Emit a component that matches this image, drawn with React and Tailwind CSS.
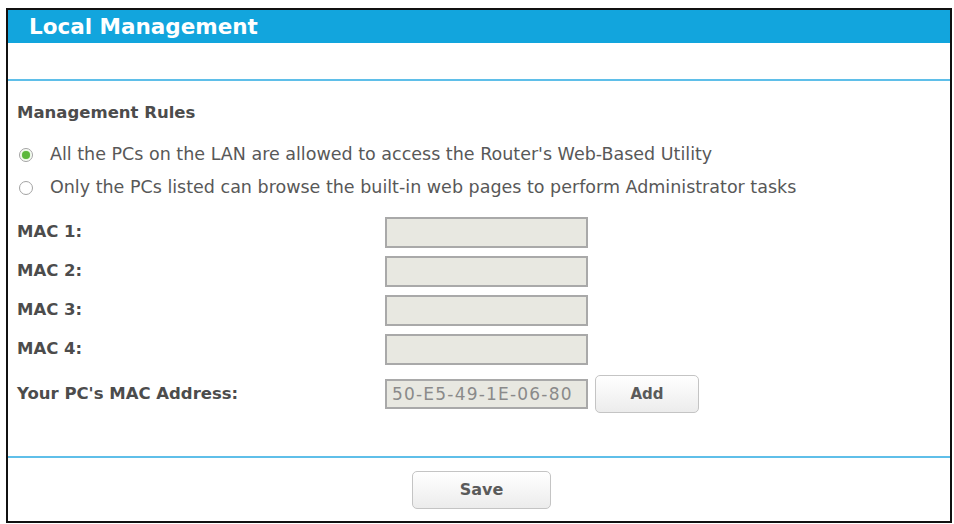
import React, { useState } from 'react';

const font = { fontFamily: '"DejaVu Sans", Verdana, sans-serif' };

const Radio = ({ checked, onClick }) => (
  <span
    onClick={onClick}
    className="flex items-center justify-center w-[14px] h-[14px] rounded-full border border-[#a3a3a3] bg-white cursor-pointer"
  >
    {checked && <span className="w-[8px] h-[8px] rounded-full bg-[#5cb83c] shadow-[0_0_2px_#9be07f]" />}
  </span>
);

const MacInput = () => (
  <input
    type="text"
    className="w-[203px] h-[31px] px-[6px] border-2 border-[#a9a9a9] bg-[#e8e8e1] text-[17px] text-[#8a8a8a] outline-none"
  />
);

const Button = ({ children, className = '' }) => (
  <button
    type="button"
    className={`h-[38px] rounded-[5px] border border-[#c4c4c4] bg-gradient-to-b from-white to-[#ececec] font-bold text-[#5a5a5a] ${className}`}
  >
    {children}
  </button>
);

export default function App() {
  const [rule, setRule] = useState(0);
  const macs = ['MAC 1:', 'MAC 2:', 'MAC 3:', 'MAC 4:'];

  return (
    <div className="w-[954px] h-[524px] bg-white overflow-hidden" style={font}>
      <div className="ml-[6px] mt-[8px] w-[946px] h-[515px] border-2 border-[#111] flex flex-col">
        <div className="h-[33px] bg-[#12a5dd] flex items-center pl-[21px]">
          <span className="text-[21.5px] font-bold text-white leading-none">Local Management</span>
        </div>

        <div className="mt-[36px] h-[2px] bg-[#5fbfe9]" />

        <div className="mt-[24px] pl-[9px] h-[16px] leading-[16px] text-[16.5px] font-bold text-[#4c4c4c]">
          Management Rules
        </div>

        <div className="mt-[17px] pl-[11px] text-[17.5px] text-[#585858]">
          <div className="h-[33px] flex items-center gap-[17px]">
            <Radio checked={rule === 0} onClick={() => setRule(0)} />
            <span>All the PCs on the LAN are allowed to access the Router's Web-Based Utility</span>
          </div>
          <div className="h-[33px] flex items-center gap-[17px]">
            <Radio checked={rule === 1} onClick={() => setRule(1)} />
            <span>Only the PCs listed can browse the built-in web pages to perform Administrator tasks</span>
          </div>
        </div>

        <div className="mt-[13px] pl-[9px] flex flex-col gap-[8px] text-[16.5px] font-bold text-[#4c4c4c]">
          {macs.map((m) => (
            <div key={m} className="flex items-center">
              <span className="w-[368px]">{m}</span>
              <MacInput />
            </div>
          ))}
        </div>

        <div className="mt-[10px] pl-[9px] flex items-center text-[16.5px] font-bold text-[#4c4c4c]">
          <span className="w-[368px]">Your PC's MAC Address:</span>
          <input
            type="text"
            readOnly
            value="50-E5-49-1E-06-80"
            className="w-[203px] h-[30px] px-[5px] border-2 border-[#a9a9a9] bg-[#e8e8e1] text-[17px] tracking-[1.2px] font-normal text-[#8a8a8a] outline-none"
          />
          <Button className="ml-[7px] w-[104px] text-[15px]">Add</Button>
        </div>

        <div className="mt-[43px] h-[2px] bg-[#5fbfe9]" />

        <div className="mt-[13px] flex justify-center pl-[5px]">
          <Button className="w-[139px] text-[16px]">Save</Button>
        </div>
      </div>
    </div>
  );
}
